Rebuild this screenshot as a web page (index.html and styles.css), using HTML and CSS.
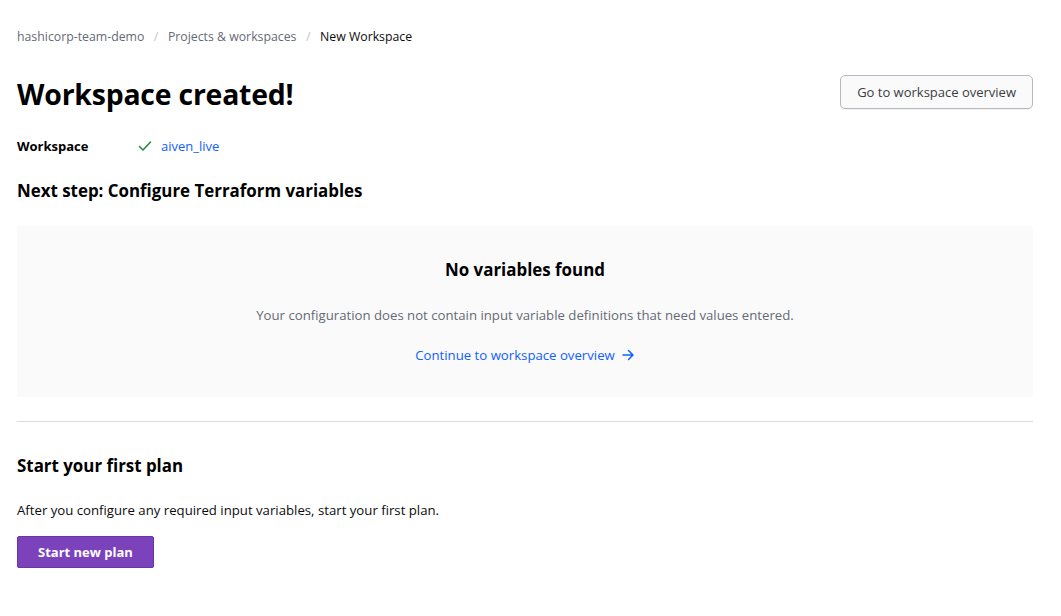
FILE: index.html
```html
<!DOCTYPE html>
<html lang="en">
<head>
<meta charset="utf-8">
<title>New Workspace</title>
<link rel="stylesheet" href="styles.css">
</head>
<body>
<main class="page">
  <nav class="crumbs">
    <a class="crumb" href="#">hashicorp-team-demo</a>
    <span class="sep">/</span>
    <a class="crumb" href="#">Projects &amp; workspaces</a>
    <span class="sep">/</span>
    <span class="crumb current">New Workspace</span>
  </nav>

  <header class="head">
    <h1 class="title">Workspace created!</h1>
    <button class="btn-secondary">Go to workspace overview</button>
  </header>

  <div class="ws-row">
    <span class="ws-label">Workspace</span>
    <span class="ws-value">
      <svg class="check" width="16" height="16" viewBox="0 0 16 16" fill="none"><path d="M2.5 8.5l3.5 3.5 7.5-8" stroke="#2b8a3e" stroke-width="1.6" stroke-linecap="round" stroke-linejoin="round"/></svg>
      <a class="link" href="#">aiven_live</a>
    </span>
  </div>

  <h2 class="h2 next">Next step: Configure Terraform variables</h2>

  <section class="empty">
    <h3 class="h2">No variables found</h3>
    <p class="empty-text">Your configuration does not contain input variable definitions that need values entered.</p>
    <a class="link cont" href="#">Continue to workspace overview
      <svg width="14" height="14" viewBox="0 0 14 14" fill="none"><path d="M2 7h10M7.5 2.5L12 7l-4.5 4.5" stroke="#1060ff" stroke-width="1.5" stroke-linecap="round" stroke-linejoin="round"/></svg>
    </a>
  </section>

  <hr class="rule">

  <h2 class="h2 plan">Start your first plan</h2>
  <p class="plan-text">After you configure any required input variables, start your first plan.</p>
  <button class="btn-primary">Start new plan</button>
</main>
</body>
</html>
```
FILE: styles.css
```css
* { box-sizing: border-box; }
html, body { margin: 0; padding: 0; background: #fff; }
body {
  font-family: "Open Sans", "Noto Sans", sans-serif;
  color: #000;
  font-size: 13px;
}
.page { padding: 26px 28px 0 17px; }
.crumbs { display: flex; align-items: center; gap: 9.5px; font-size: 12.3px; height: 20px; }
.crumb { color: #656a76; text-decoration: none; }
.crumb.current { color: #0c0c0e; }
.sep { color: #c2c5cb; }
.head { display: flex; justify-content: space-between; align-items: flex-start; margin-top: 28px; }
.title { margin: 0; font-size: 28.4px; font-weight: 700; letter-spacing: -0.2px; line-height: 40px; }
.btn-secondary {
  margin-top: 1px;
  font-family: inherit; font-size: 13px; color: #3b3d45;
  background: #fafafa; border: 1px solid #b6b9c1; border-radius: 5px;
  height: 34px; padding: 0 16px; box-shadow: 0 1px 1px rgba(0,0,0,0.06);
}
.ws-row { display: flex; align-items: center; margin-top: 20px; height: 24px; }
.ws-label { width: 120px; font-weight: 700; font-size: 13px; }
.ws-value { display: flex; align-items: center; gap: 8px; }
.link { color: #1060ff; text-decoration: none; font-size: 13px; }
.h2 { margin: 0; font-size: 16.9px; font-weight: 700; line-height: 24px; }
.next { margin-top: 21px; }
.empty {
  margin-top: 23px; background: #fafafa; border-radius: 2px;
  height: 171px; padding-top: 32px; text-align: center;
}
.empty-text { margin: 23px 0 0; color: #656a76; font-size: 13.2px; line-height: 20px; }
.cont { display: inline-flex; align-items: center; gap: 6px; margin-top: 21px; font-size: 13.2px; }
.rule { margin: 24px 0 0; border: 0; border-top: 1px solid #dbdbdc; }
.plan { margin-top: 32px; }
.plan-text { margin: 22px 0 0; font-size: 13.2px; line-height: 20px; color: #0c0c0e; }
.btn-primary {
  margin-top: 16px; font-family: inherit; font-size: 13px; font-weight: 700;
  color: #fff; background: #7b42bc; border: 1px solid #6a36a6; border-radius: 2px;
  height: 32px; padding: 0 20px; box-shadow: 0 3px 0 #e2e3e6;
}
```
